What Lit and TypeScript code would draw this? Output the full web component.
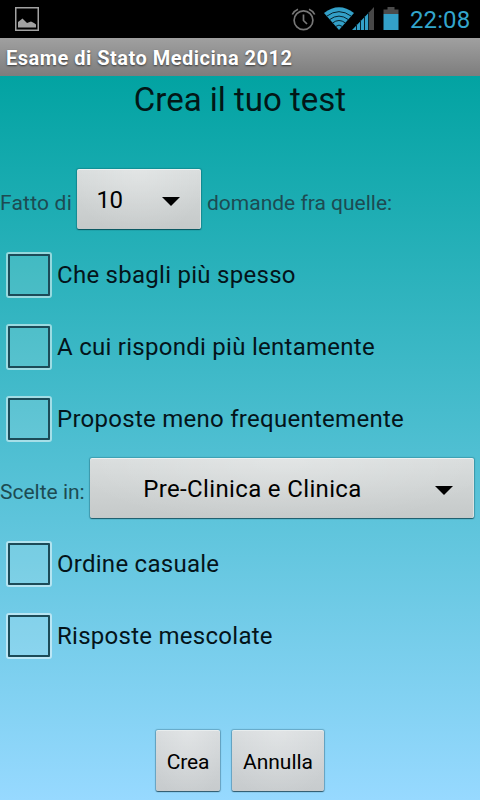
import { LitElement, html, css } from "lit";
import { customElement, property } from "lit/decorators.js";

@customElement("status-bar")
class StatusBar extends LitElement {
  static styles = css`
    :host { display: flex; height: 38px; background: #000; align-items: flex-start; justify-content: space-between; }
    .shot { margin: 7px 0 0 15px; }
    .right { display: flex; }
    svg { display: block; }
    .time { font: 24px/38px Roboto, sans-serif; color: #33a5cc; letter-spacing: 0.1px; width: 70px; white-space: nowrap; margin-top: 1px; }
  `;
  render() {
    return html`
      <svg class="shot" width="24" height="24" viewBox="0 0 24 24">
        <rect x=".75" y=".75" width="22.5" height="22.5" fill="none" stroke="#a2a2a2" stroke-width="1.5" />
        <path d="M3 20.5V15L5 13.5 7.5 11.5 10 14 12 16 16 14.5 19 16 21 17.5V20.5Z" fill="#a2a2a2" />
      </svg>
      <div class="right">
        <svg width="130" height="38" viewBox="280 0 130 38">
          <g fill="none" stroke="#777" stroke-width="1.7">
            <circle cx="303.5" cy="20.3" r="9.4" />
            <path d="M303.5 14.5V20.5L307 24" />
            <path d="M292.3 14.5Q294 10.8 298 9.2M309 9.2Q313 10.8 314.7 14.5" />
          </g>
          <path d="M324 13Q339 1.5 354 13L339 30Z" fill="#33a0c8" />
          <g fill="none" stroke="#06222d" stroke-width="1">
            <path d="M326.5 16.3Q339 7 351.5 16.3M329.5 19.7Q339 12.5 348.5 19.7M332.5 23Q339 18 345.5 23M335.5 26.5Q339 23.7 342.5 26.5" />
          </g>
          <path d="M352 30L368 13.5V30Z" fill="#33a0c8" />
          <path d="M368 13.5L374 7V30H368Z" fill="#484848" />
          <path d="M356.5 24V30M360.5 20V30M364.5 16V30M368.5 12V30" stroke="#06222d" stroke-width="1" />
          <path d="M383.5 14V9.5H387.5V7H394.5V9.5H398.5V14Z" fill="#4b4b4b" />
          <path d="M383.5 14H398.5V30H383.5Z" fill="#33a0c8" />
        </svg>
        <div class="time">22:08</div>
      </div>`;
  }
}

@customElement("check-row")
class CheckRow extends LitElement {
  @property() label = "";
  static styles = css`
    :host { display: flex; height: 72px; align-items: center; }
    .box { box-sizing: border-box; width: 46px; height: 46px; margin-left: 6px; border: 2px solid rgba(255,255,255,.5); border-radius: 3px; flex: none; }
    .inner { box-sizing: border-box; width: 42px; height: 42px; border: 2px solid #1c4b58; border-radius: 1px; background: rgba(255,255,255,.13); }
    .label { font: 24px/28px Roboto, sans-serif; color: #04141a; margin-left: 5px; letter-spacing: .27px; white-space: nowrap; }
  `;
  render() {
    return html`<div class="box"><div class="inner"></div></div><span class="label">${this.label}</span>`;
  }
}

@customElement("spinner-box")
class SpinnerBox extends LitElement {
  @property() value = "";
  static styles = css`
    :host { display: flex; box-sizing: border-box; height: 60px; align-items: center; border-radius: 2px; color: #000;
      background: radial-gradient(ellipse at 50% 0, rgba(255,255,255,.25), rgba(255,255,255,0) 80%), linear-gradient(#d9dddd, #c5c9c9);
      box-shadow: inset 0 1px #edf1f1, inset -1px 0 #dce2e2, 0 1px 1px rgba(0,40,50,.6), 0 0 1px 1px rgba(0,60,70,.25); }
    .value { flex: 1; padding-right: 20px; text-align: center; font: 24px/28px Roboto, sans-serif; letter-spacing: var(--track, 0); white-space: nowrap; margin-top: 2px; }
    svg { display: block; margin: 4px 21px 0 0; flex: none; }
  `;
  render() {
    return html`<span class="value">${this.value}</span>
      <svg width="18" height="9" viewBox="0 0 18 9"><path d="M0 0H18L9 9Z" /></svg>`;
  }
}

@customElement("app-root")
class AppRoot extends LitElement {
  static styles = css`
    :host { display: flex; flex-direction: column; width: 480px; height: 800px; overflow: hidden; font-family: Roboto, sans-serif; }
    .bar { box-sizing: border-box; height: 38px; padding-left: 6px; background: linear-gradient(#a0a0a0, #7d7d7d); color: #fff;
      font: bold 20px/40px Roboto, sans-serif; letter-spacing: .49px; text-shadow: 0 1px 2px rgba(0,0,0,.6); white-space: nowrap; }
    .page { flex: 1; display: flex; flex-direction: column; background: linear-gradient(#02a3a2, #97d9ff); }
    h1 { margin: 0; height: 89px; text-align: center; font: 33px/48px Roboto, sans-serif; color: #021717; }
    .row { display: flex; box-sizing: border-box; align-items: flex-start; white-space: nowrap; font-size: 21px; line-height: 26px; color: #1d4b52; }
    .first { height: 74px; padding-top: 4px; }
    .second { height: 73px; padding-top: 3px; }
    .cap { margin-top: 21px; flex: none; }
    .made { width: 77px; letter-spacing: .2px; }
    .in { width: 90px; }
    .count { width: 124px; --track: -.6px; }
    .topic { width: 384px; --track: .35px; }
    .after { margin-left: 6px; }
    .actions { display: flex; justify-content: center; gap: 12px; margin-top: 58px; }
    button { box-sizing: border-box; height: 61px; padding: 2px 0 0; border: 0; border-radius: 2px; color: #000; font: 21px/26px Roboto, sans-serif;
      background: radial-gradient(ellipse at 50% 0, rgba(255,255,255,.25), rgba(255,255,255,0) 85%), linear-gradient(#d7dbdd, #c7cbcd);
      box-shadow: inset 0 1px #e8edee, 0 1px 1px rgba(0,30,40,.6), 0 0 1px 1px rgba(20,70,90,.3); }
    .create { width: 64px; letter-spacing: -.2px; }
    .cancel { width: 92px; }
  `;
  render() {
    return html`
      <status-bar></status-bar>
      <div class="bar">Esame di Stato Medicina 2012</div>
      <div class="page">
        <h1>Crea il tuo test</h1>
        <div class="row first">
          <span class="cap made">Fatto di</span>
          <spinner-box class="count" value="10"></spinner-box>
          <span class="cap after">domande fra quelle:</span>
        </div>
        ${["Che sbagli più spesso", "A cui rispondi più lentamente", "Proposte meno frequentemente"].map(
          (t) => html`<check-row label=${t}></check-row>`
        )}
        <div class="row second">
          <span class="cap in">Scelte in:</span>
          <spinner-box class="topic" value="Pre-Clinica e Clinica"></spinner-box>
        </div>
        ${["Ordine casuale", "Risposte mescolate"].map((t) => html`<check-row label=${t}></check-row>`)}
        <div class="actions">
          <button class="create">Crea</button>
          <button class="cancel">Annulla</button>
        </div>
      </div>`;
  }
}
